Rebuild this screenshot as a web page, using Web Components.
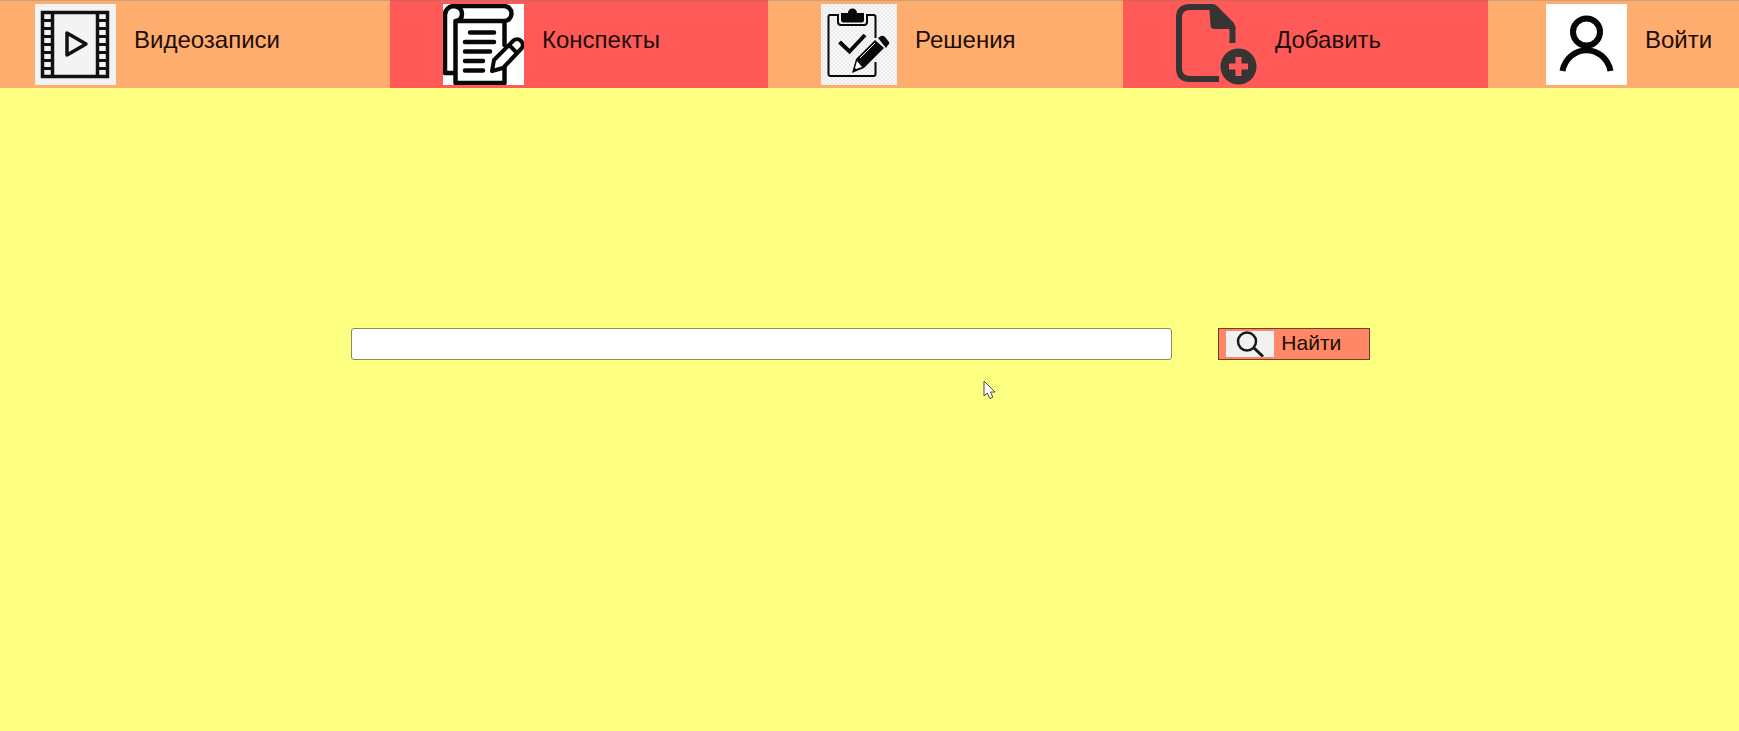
<!DOCTYPE html>
<html lang="ru">
<head>
<meta charset="utf-8">
<title>Видеозаписи и конспекты</title>
<style>
html { height: 100%; }
body { margin: 0; min-height: 100%; background: #fdff80; font-family: "Liberation Sans", Arial, sans-serif; color: #1c0d08; }
</style>
</head>
<body>
<study-page></study-page>
<script>
const define = (name, html) => {
  const template = document.createElement('template');
  template.innerHTML = html;
  customElements.define(name, class extends HTMLElement {
    constructor() {
      super();
      this.attachShadow({ mode: 'open' }).append(template.content.cloneNode(true));
    }
  });
};

define('nav-item', `
<style>
:host { display: block; min-width: 0; background: #ffad6e; box-shadow: inset 0 1px #c6a07c; }
:host([accent]) { background: #ff5a58; box-shadow: inset 0 1px #c66a62; }
a { display: flex; align-items: center; gap: 18px; height: 100%; box-sizing: border-box; padding-left: var(--lead, 53px); color: inherit; text-decoration: none; font-size: 24px; line-height: 28px; white-space: nowrap; }
.label { padding-bottom: 8px; }
::slotted(svg) { display: block; flex: none; }
</style>
<a href="#"><slot name="icon"></slot><span class="label"><slot></slot></span></a>`);

define('nav-bar', `
<style>
:host { display: block; }
nav { display: grid; grid-template-columns: 390fr 378fr 355fr 365fr 251fr; height: 88px; }
.first { --lead: 35px; }
.last { --lead: 58px; }
svg { display: block; }
</style>
<nav>
<nav-item class="first">
<svg slot="icon" width="81" height="81" viewBox="0 0 81 81" fill="none" stroke="#111">
<path fill="#f3f3f3" stroke="none" d="M0 0h81v81H0z"/>
<path stroke-width="3.500" d="M7.500 8.500h65v64h-65zM17.500 8v65M62.500 8v65"/>
<path stroke-width="9" stroke-dasharray="3 5" d="M12.500 7v67M67.500 7v67"/>
<path stroke-width="3.500" stroke-linejoin="round" d="M32 29v22l19-11z"/>
</svg>Видеозаписи</nav-item>
<nav-item accent>
<svg slot="icon" width="81" height="81" viewBox="0 0 81 81" fill="none" stroke="#080808" stroke-width="4.500" stroke-linecap="round" stroke-linejoin="round">
<path fill="#fff" stroke="none" d="M0 0h81v81H0z"/>
<path d="M10 2h51a7.500 7.500 0 0 1 0 15H12.500v62H61.500V60M61.500 17v24M12.500 69H2V11a9 9 0 0 1 9-9q8 1 8 8 0 6-6 7"/>
<path d="M27 28.500h24M22 38h29M22 47.500h25M22 57h18M22 66.500h18"/>
<path fill="#fff" stroke-width="4" d="M49 67l2-11 19-19a5.500 5.500 0 0 1 8 8l-18 19zM66 41l7 7"/>
</svg>Конспекты</nav-item>
<nav-item>
<svg slot="icon" width="76" height="81" viewBox="0 0 76 81" fill="none" stroke="#080808">
<defs><pattern id="checks" width="4" height="4" patternUnits="userSpaceOnUse"><path fill="#f8f8f8" stroke="none" d="M0 0h4v4H0z"/><path fill="#ebebeb" stroke="none" d="M0 0h2v2H0zM2 2h2v2H2z"/></pattern></defs>
<path fill="url(#checks)" stroke="none" d="M0 0h76v81H0z"/>
<path stroke-width="2" stroke-linejoin="round" d="M17 11H9q-1.500 0-1.500 2v57q0 2 2 2h43q2 0 2-2V58M54.500 34V13q0-2-2-2H46M17 10v8q0 3 3 3h23q3 0 3-3v-8"/>
<path fill="#080808" stroke="none" d="M20 9h7a4.500 4.500 0 0 1 9 0h7v7q0 2.500-2 2.500H22q-2 0-2-2.500z"/>
<path stroke-width="4" d="M18.500 38l10 9.500L44 31"/>
<path fill="#080808" stroke="none" d="M35 55l19-19 9 8-20 20-12 5zM57 34l3-2q2-1 4 1l4 5q1 2-1 3l-2 3z"/>
<path stroke="#fff" stroke-width="1" d="M39 54l15-15"/>
<path fill="#fff" stroke="none" d="M36 57l5 6-6 2-1-1z"/>
</svg>Решения</nav-item>
<nav-item accent>
<svg slot="icon" width="81" height="81" viewBox="0 0 81 81" fill="none" stroke="#363533" stroke-width="6">
<path d="M43 75H14Q3 75 3 64V14Q3 3 14 3h23M56.500 39V22"/>
<path fill="#363533" stroke="none" d="M33 0h3q3 0 5 2l16 16q2 2 2.500 7H39q-4.500 0-4.500-4z"/>
<path fill="#363533" stroke="none" d="M35 72h4l4.500 6H35z"/>
<circle cx="62.500" cy="62.500" r="18" fill="#363533" stroke="none"/>
<path stroke="#ff5a58" d="M62.500 53v19M53 62.500h19"/>
</svg>Добавить</nav-item>
<nav-item class="last">
<svg slot="icon" width="81" height="81" viewBox="0 0 81 81" fill="none" stroke="#050505" stroke-width="6">
<path fill="#fff" stroke="none" d="M0 0h81v81H0z"/>
<circle cx="40.500" cy="28" r="13.500"/>
<path d="M16.500 67a24.500 26 0 0 1 48 0"/>
</svg>Войти</nav-item>
</nav>`);

define('search-form', `
<style>
:host { display: block; }
form { display: grid; grid-template-columns: 821fr 152px; gap: 46px; margin: 0 21.2% 0 20.2%; }
input { box-sizing: border-box; width: 100%; min-width: 0; height: 32px; margin: 0; padding: 0 8px; border: 1px solid #8b8b5c; border-radius: 3px; background: #fff; font: 21px "Liberation Sans", Arial, sans-serif; }
button { display: flex; align-items: center; gap: 7px; height: 32px; box-sizing: border-box; margin: 0; padding: 0 7px; border: 1px solid #70401e; border-radius: 0; background: #ff8766; color: inherit; font: 21px/24px "Liberation Sans", Arial, sans-serif; }
span { padding-bottom: 2px; }
</style>
<form>
<input type="search" aria-label="Поиск">
<button type="button">
<svg width="48" height="26" viewBox="0 0 48 26" fill="none" stroke="#181818" stroke-width="2.500"><path fill="#f1f1f1" stroke="none" d="M0 0h48v26H0z"/><circle cx="21" cy="10.500" r="9"/><path stroke-width="3" d="M28 17l9 8.500"/></svg>
<span>Найти</span>
</button>
</form>`);

define('mouse-pointer', `
<style>:host { display: block; position: absolute; left: 983px; top: 380px; pointer-events: none; } svg { display: block; }</style>
<svg width="13" height="20" viewBox="0 0 13 20"><path fill="#fff" stroke="#4c4a42" stroke-linejoin="round" d="M1 1v15l3.300-3 2.500 5.500 3-1.300L7.500 12H12z"/></svg>`);

define('study-page', `
<style>
:host { display: block; }
main { padding-top: 240px; }
</style>
<nav-bar></nav-bar>
<main><search-form></search-form></main>
<mouse-pointer></mouse-pointer>`);
</script>
</body>
</html>
